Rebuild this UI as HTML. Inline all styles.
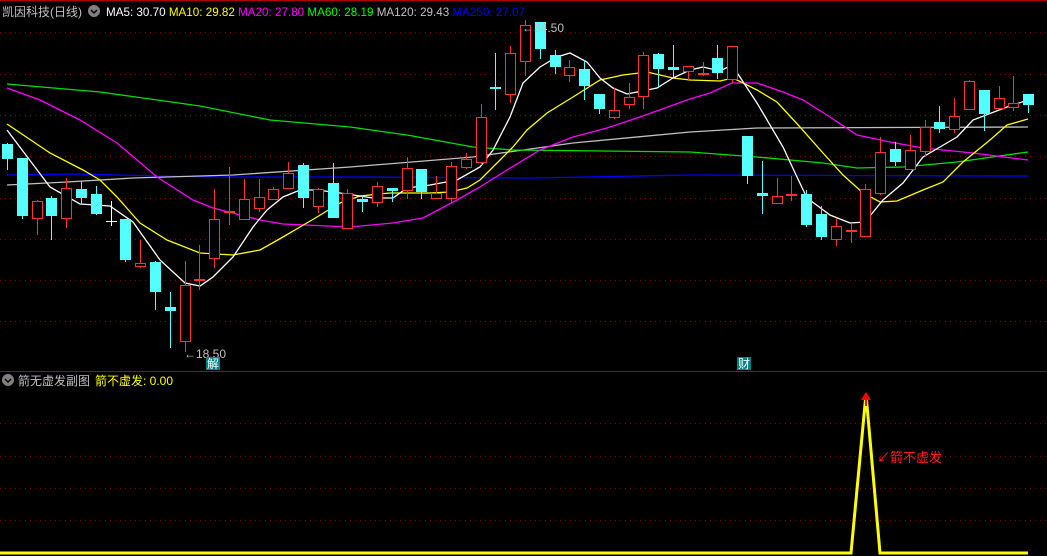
<!DOCTYPE html>
<html><head><meta charset="utf-8">
<style>
html,body{margin:0;padding:0;background:#000;width:1047px;height:556px;overflow:hidden}
svg{position:absolute;left:0;top:0}
text{font-family:"Liberation Sans","Noto Sans CJK SC",sans-serif}
</style></head><body>
<svg id="s" width="1047" height="556" viewBox="0 0 1047 556" shape-rendering="crispEdges">
<line x1="0" y1="0.5" x2="1047" y2="0.5" stroke="#b00000"/>
<g stroke="#8a0000" stroke-dasharray="1,4">
<line x1="0" y1="32.5" x2="1047" y2="32.5"/><line x1="0" y1="74.5" x2="1047" y2="74.5"/>
<line x1="0" y1="115.5" x2="1047" y2="115.5"/><line x1="0" y1="156.5" x2="1047" y2="156.5"/>
<line x1="0" y1="198.5" x2="1047" y2="198.5"/><line x1="0" y1="239.5" x2="1047" y2="239.5"/>
<line x1="0" y1="280.5" x2="1047" y2="280.5"/><line x1="0" y1="321.5" x2="1047" y2="321.5"/>
<line x1="0" y1="423.5" x2="1047" y2="423.5"/><line x1="0" y1="456.5" x2="1047" y2="456.5"/>
<line x1="0" y1="488.5" x2="1047" y2="488.5"/><line x1="0" y1="520.5" x2="1047" y2="520.5"/>
</g>
<line x1="0" y1="371.5" x2="1047" y2="371.5" stroke="#b00000"/>
<g fill="none" stroke-width="1.3" shape-rendering="auto">
<polyline stroke="#0000ff" points="7,175 73,174 207,177 350,177 533,178 690,175 1028,176"/>
<polyline stroke="#c0c0c0" points="7,185 67,182 133,178 233,175 350,167 473,157 573,143 690,132 757,128 1028,127"/>
<polyline stroke="#00e000" points="7,84 100,92 200,106 270,120 350,127 407,135 473,147 513,150 690,152 757,157 823,163 857,168 903,167 957,162 1028,152"/>
<polyline stroke="#ff00ff" points="7,88 40,100 80,120 117,143 157,177 193,200 213,208 260,220 283,224 350,227 393,223 423,218 457,200 480,187 507,170 540,150 573,137 607,128 640,117 690,99 710,93 732,83 757,83 783,92 803,100 830,117 857,135 890,142 923,148 973,153 1028,160"/>
<polyline stroke="#ffff00" points="7,124 50,153 83,170 100,180 117,197 140,223 167,240 200,253 233,255 260,250 283,237 300,227 317,217 340,203 360,196 390,193 430,193 450,192 467,188 480,180 497,163 513,147 527,130 547,113 573,97 600,80 623,75 647,72 673,78 690,80 720,81 733,78 757,90 777,102 800,127 823,153 843,175 863,193 880,202 897,201 923,190 943,182 963,162 990,140 1007,125 1028,119"/>
<polyline stroke="#ffffff" points="7,130 50,187 80,204 110,206 133,222 160,260 185,283 200,286 213,277 233,257 253,227 267,210 283,197 300,190 317,190 340,193 373,198 393,198 407,188 430,185 457,180 480,167 493,150 510,117 523,83 540,67 557,57 570,53 587,62 600,78 613,88 627,94 657,88 673,78 690,70 703,67 720,71 732,65 757,103 783,147 797,177 807,198 830,215 850,223 865,222 883,200 903,183 923,157 940,147 957,137 973,120 1007,107 1028,100"/>
</g>
<g id="cd"></g>
<text x="184" y="358" fill="#c0c0c0" font-size="12">←18.50</text>
<text x="522" y="32" fill="#c0c0c0" font-size="12">←34.50</text>
<rect x="206" y="357" width="14" height="13" fill="#008080"/>
<text x="207" y="368" fill="#fff" font-size="12">解</text>
<rect x="737" y="357" width="14" height="13" fill="#008080"/>
<text x="738" y="368" fill="#fff" font-size="12">财</text>
<circle cx="94" cy="11" r="6" fill="#808080"/><path d="M91 10 L94 13 L97 10" stroke="#000" stroke-width="1.5" fill="none" shape-rendering="auto"/>
<text x="2" y="16" font-size="12" fill="#c0c0c0" textLength="80" lengthAdjust="spacingAndGlyphs">凯因科技(日线)</text>
<text x="106" y="16" font-size="12" xml:space="preserve" textLength="419" lengthAdjust="spacingAndGlyphs"><tspan fill="#fff">MA5: 30.70 </tspan><tspan fill="#ffff00">MA10: 29.82 </tspan><tspan fill="#ff00ff">MA20: 27.80 </tspan><tspan fill="#00ff00">MA60: 28.19 </tspan><tspan fill="#c0c0c0">MA120: 29.43 </tspan><tspan fill="#0000ff">MA250: 27.07</tspan></text>
<circle cx="8" cy="380" r="6" fill="#808080"/><path d="M5 379 L8 382 L11 379" stroke="#000" stroke-width="1.5" fill="none" shape-rendering="auto"/>
<text x="18" y="385" font-size="12" fill="#c0c0c0" textLength="72" lengthAdjust="spacingAndGlyphs">箭无虚发副图</text>
<text x="95" y="385" font-size="12" fill="#ffff00" textLength="78" lengthAdjust="spacingAndGlyphs">箭不虚发: 0.00</text>
<polyline fill="none" stroke="#ffff00" stroke-width="3" shape-rendering="auto" points="0,553 851,553 866,394 880,553 1028,553"/>
<path d="M866 392 L861 400 L871 400 Z" fill="#ff0000"/><line x1="866" y1="398" x2="866" y2="406" stroke="#ff0000" stroke-width="2"/>
<text x="877" y="462" font-size="13" fill="#ff2020">↙箭不虚发</text>
</svg>
<script>
var d=[[144,159,143,170,'c'],[158,216,158,219,'c'],[201,218,200,235,'r'],[198,216,196,240,'c'],[188,218,178,228,'r'],[189,198,181,204,'c'],[194,214,186,215,'c'],[221,221,201,226,'w'],[219,260,219,262,'c'],[263,266,240,268,'r'],[262,292,261,310,'c'],[307,311,292,348,'c'],[285,341,261,352,'r'],[279,279,245,290,'r'],[219,258,189,268,'r'],[211,211,167,225,'r'],[199,219,179,220,'r'],[197,208,179,212,'r'],[189,199,187,199,'r'],[173,188,162,189,'r'],[165,198,163,208,'c'],[189,206,188,213,'r'],[183,218,163,218,'c'],[193,228,189,228,'r'],[199,202,195,212,'c'],[186,202,182,207,'r'],[188,191,188,202,'c'],[168,190,157,199,'r'],[169,192,169,199,'c'],[193,198,176,198,'r'],[166,198,162,203,'r'],[159,167,153,169,'r'],[117,162,104,165,'r'],[87,88,53,110,'c'],[53,94,46,103,'r'],[25,61,20,76,'r'],[22,49,22,59,'c'],[55,67,50,74,'c'],[67,75,60,82,'r'],[69,86,60,100,'c'],[94,109,94,114,'c'],[110,117,88,119,'r'],[97,104,83,109,'r'],[55,96,52,109,'r'],[54,69,53,87,'c'],[67,70,45,77,'c'],[66,71,66,80,'r'],[73,74,62,76,'r'],[58,73,45,79,'c'],[46,79,46,83,'r'],[136,176,136,184,'c'],[193,196,161,214,'c'],[196,203,178,203,'r'],[194,196,176,201,'r'],[194,225,190,227,'c'],[214,237,206,240,'c'],[226,239,218,246,'r'],[230,232,224,243,'r'],[189,236,184,236,'r'],[152,193,137,195,'r'],[149,162,142,166,'c'],[150,169,135,169,'r'],[127,151,120,156,'r'],[122,129,106,133,'c'],[116,129,98,133,'r'],[81,109,80,109,'r'],[90,114,90,131,'c'],[98,108,86,108,'r'],[103,107,76,111,'r'],[94,105,94,113,'c']];
var h='';d.forEach(function(c,i){var x=Math.round(2+14.8*i),cx=x+5,col=c[4]=='c'?'#54ffff':c[4]=='r'?'#ff3232':'#ffffff';
h+='<line x1="'+(cx+.5)+'" y1="'+c[2]+'" x2="'+(cx+.5)+'" y2="'+c[3]+'" stroke="'+col+'"/>';
var bh=Math.max(c[1]-c[0],1);
if(c[4]=='c')h+='<rect x="'+x+'" y="'+c[0]+'" width="11" height="'+Math.max(bh,2)+'" fill="'+col+'"/>';
else if(c[4]=='w')h+='<line x1="'+x+'" y1="'+(c[0]+.5)+'" x2="'+(x+11)+'" y2="'+(c[0]+.5)+'" stroke="#fff"/>';
else if(bh<=2)h+='<rect x="'+x+'" y="'+c[0]+'" width="11" height="2" fill="'+col+'"/>';
else h+='<rect x="'+(x+.5)+'" y="'+(c[0]+.5)+'" width="10" height="'+bh+'" fill="#000" stroke="'+col+'"/>';});
document.getElementById('cd').innerHTML=h;
</script>
</body></html>
